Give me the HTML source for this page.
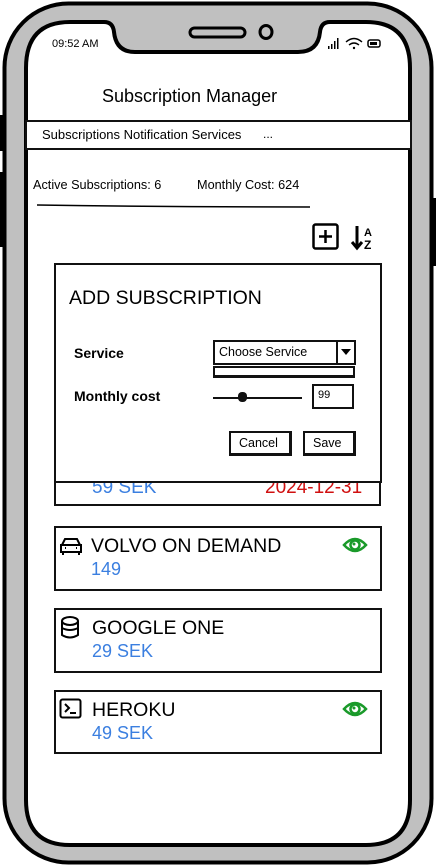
<!DOCTYPE html>
<html><head><meta charset="utf-8"><style>
*{margin:0;padding:0;box-sizing:border-box}
body{width:436px;height:867px;background:#fff;position:relative;overflow:hidden;font-family:"Liberation Sans",sans-serif;color:#000}
.a{position:absolute;white-space:nowrap}
.box{position:absolute;border:2px solid #111;background:#fff}
.blue{color:#3b7fe0}
</style></head><body>
<svg class="a" style="left:0;top:0" width="436" height="867">
<rect x="0" y="115" width="6" height="36" fill="#000"/>
<rect x="0" y="172" width="6" height="75" fill="#000"/>
<rect x="430" y="198" width="6" height="68" fill="#000"/>
<rect x="4.5" y="3.5" width="427" height="859" rx="64" fill="#c0c0c0" stroke="#000" stroke-width="4"/>
<path d="M70 22 L104 22 Q113 22 114 32 Q116 52 135 52 L298 52 Q318 52 320 32 Q321 22 330 22 L366 22 Q410 22 410 68 L410 800 Q410 845 366 845 L70 845 Q26 845 26 800 L26 68 Q26 22 70 22 Z" fill="#fff" stroke="#000" stroke-width="4"/>
<rect x="190" y="28" width="55" height="9" rx="4.5" fill="#c0c0c0" stroke="#000" stroke-width="3"/>
<ellipse cx="266" cy="32" rx="6" ry="6.5" fill="#c0c0c0" stroke="#000" stroke-width="3"/>
<g fill="#000"><rect x="328" y="46" width="1.5" height="3"/><rect x="331" y="44" width="1.5" height="5"/><rect x="334" y="41" width="1.5" height="8"/><rect x="337" y="38" width="1.5" height="11"/></g>
<path d="M346 42 Q354 35 362 42 M349 45 Q354 41 359 45" fill="none" stroke="#000" stroke-width="1.4"/><circle cx="354" cy="48" r="1.2"/>
<rect x="368" y="40" width="12" height="7" rx="2" fill="none" stroke="#000" stroke-width="1.5"/><rect x="370" y="42" width="7" height="3"/>
<path d="M37 205 Q170 207 310 207" stroke="#000" stroke-width="1.5" fill="none"/>
<rect x="313.5" y="224.5" width="24" height="24" rx="2" fill="none" stroke="#000" stroke-width="2.5"/>
<path d="M325.5 230v13M319 236.5h13" stroke="#000" stroke-width="2.5"/>
<path d="M357 226v21M352 242l5 6 5-6" stroke="#000" stroke-width="3" fill="none"/>
<text x="364" y="236" font-size="11" font-weight="bold" font-family="Liberation Sans">A</text>
<text x="364" y="249" font-size="12" font-weight="bold" font-family="Liberation Sans">Z</text>
</svg>
<div class="a" style="left:52px;top:38px;font-size:11px">09:52 AM</div>
<div class="a" style="left:102px;top:86px;font-size:18px">Subscription Manager</div>
<div class="box" style="left:25px;top:120px;width:387px;height:30px;border-width:2px"></div>
<div class="a" style="left:42px;top:127px;font-size:13px">Subscriptions Notification Services</div>
<div class="a" style="left:263px;top:127px;font-size:12px">...</div>
<div class="a" style="left:33px;top:178px;font-size:12.7px">Active Subscriptions: 6</div>
<div class="a" style="left:197px;top:178px;font-size:12.7px">Monthly Cost: 624</div>

<div class="box" style="left:54px;top:478px;width:327px;height:28px;overflow:hidden"><div class="a blue" style="left:36px;top:-3px;font-size:19px">59 SEK</div><div class="a" style="left:209px;top:-3px;font-size:19px;color:#d01010">2024-12-31</div></div>

<div class="box" style="left:54px;top:263px;width:328px;height:220px"></div>
<div class="a" style="left:69px;top:287px;font-size:19.5px">ADD SUBSCRIPTION</div>
<div class="a" style="left:74px;top:345px;font-size:14px;font-weight:bold">Service</div>
<div class="box" style="left:213px;top:340px;width:143px;height:25px"></div>
<div class="a" style="left:219px;top:345px;font-size:12.5px">Choose Service</div>
<div class="a" style="left:336px;top:341px;width:2px;height:23px;background:#111"></div>
<svg class="a" style="left:341px;top:349px" width="10" height="6"><path d="M0 0h10L5 6z"/></svg>
<div class="box" style="left:213px;top:366px;width:142px;height:12px;border-width:2px 2px 3px"></div>
<div class="a" style="left:74px;top:388px;font-size:14px;font-weight:bold">Monthly cost</div>
<div class="a" style="left:213px;top:397px;width:89px;height:1.5px;background:#111"></div>
<div class="a" style="left:238px;top:392px;width:9px;height:10px;border-radius:4px;background:#111"></div>
<div class="box" style="left:312px;top:384px;width:42px;height:25px"></div>
<div class="a" style="left:318px;top:389px;font-size:11px">99</div>
<div class="box" style="left:229px;top:431px;width:63px;height:25px;border-width:2px 3px 3px 2px"></div>
<div class="a" style="left:239px;top:436px;font-size:12.5px">Cancel</div>
<div class="box" style="left:303px;top:431px;width:53px;height:25px;border-width:2px 3px 3px 2px"></div>
<div class="a" style="left:313px;top:436px;font-size:12.5px">Save</div>

<div class="box" style="left:54px;top:526px;width:328px;height:65px"></div>
<svg class="a" style="left:59px;top:536px" width="24" height="20"><path d="M3 9l3-6h12l3 6M2 9h20v7H2zM4 16v3M20 16v3M6 12h1M17 12h1" fill="none" stroke="#000" stroke-width="2"/></svg>
<div class="a" style="left:91px;top:535px;font-size:19.5px">VOLVO ON DEMAND</div>
<div class="a blue" style="left:91px;top:559px;font-size:18px">149</div>
<svg class="a" style="left:342px;top:535px" width="26" height="20"><path d="M2 10Q13-2 24 10Q13 22 2 10Z" fill="none" stroke="#1a9a2a" stroke-width="2.5"/><circle cx="13" cy="10" r="4.5" fill="none" stroke="#1a9a2a" stroke-width="2.5"/><circle cx="12" cy="9" r="1.5" fill="#1a9a2a"/></svg>

<div class="box" style="left:54px;top:608px;width:328px;height:65px"></div>
<svg class="a" style="left:60px;top:616px" width="22" height="24"><ellipse cx="10" cy="5" rx="8" ry="4" fill="none" stroke="#000" stroke-width="2"/><path d="M2 5v14q8 5 16 0V5M2 12q8 4 16 0" fill="none" stroke="#000" stroke-width="2"/></svg>
<div class="a" style="left:92px;top:617px;font-size:19.5px">GOOGLE ONE</div>
<div class="a blue" style="left:92px;top:641px;font-size:18px">29 SEK</div>

<div class="box" style="left:54px;top:690px;width:328px;height:64px"></div>
<svg class="a" style="left:59px;top:698px" width="24" height="22"><rect x="1.5" y="1.5" width="20" height="18" rx="2" fill="none" stroke="#000" stroke-width="2"/><path d="M6 6l4 4-4 4M11 15h6" fill="none" stroke="#000" stroke-width="2"/></svg>
<div class="a" style="left:92px;top:699px;font-size:19.5px">HEROKU</div>
<div class="a blue" style="left:92px;top:723px;font-size:18px">49 SEK</div>
<svg class="a" style="left:342px;top:699px" width="26" height="20"><path d="M2 10Q13-2 24 10Q13 22 2 10Z" fill="none" stroke="#1a9a2a" stroke-width="2.5"/><circle cx="13" cy="10" r="4.5" fill="none" stroke="#1a9a2a" stroke-width="2.5"/><circle cx="12" cy="9" r="1.5" fill="#1a9a2a"/></svg>
</body></html>
